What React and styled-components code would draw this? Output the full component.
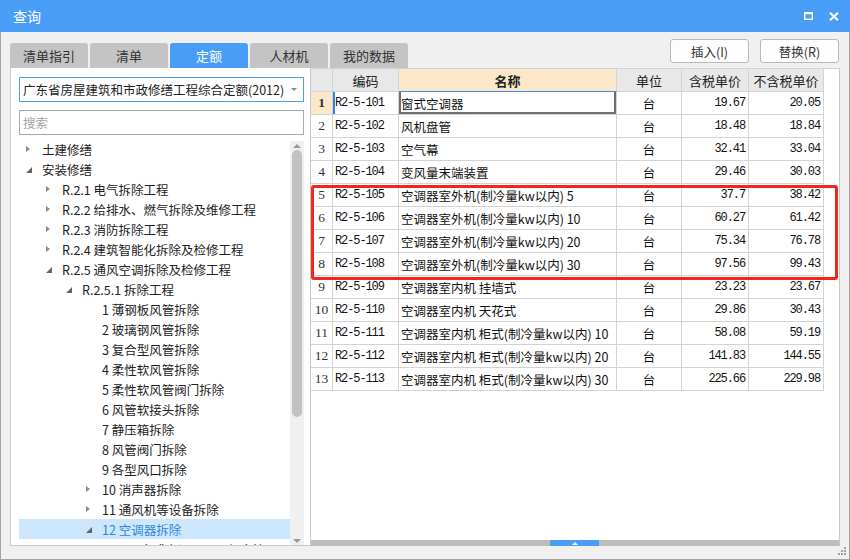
import React from 'react';
import styled, { createGlobalStyle } from 'styled-components';

const BLUE = '#4a9df7';

const GlobalStyle = createGlobalStyle`
  html, body {
    margin: 0;
    padding: 0;
    background: #ffffff;
  }
  body {
    font-family: "Noto Sans CJK SC", "Noto Sans", sans-serif;
    font-size: 12px;
    color: #222;
  }
  * {
    box-sizing: border-box;
  }
`;

const Window = styled.div`
  position: relative;
  width: 850px;
  height: 560px;
  display: flex;
  flex-direction: column;
  background: #f0f0f0;
  overflow: hidden;
`;

const TitleBar = styled.div`
  height: 32px;
  flex-shrink: 0;
  background: ${BLUE};
  color: #fff;
  display: flex;
  align-items: center;
  padding: 0 11px 0 13px;
`;

const Title = styled.div`
  font-size: 14px;
  flex: 1;
  line-height: 1;
`;

const TitleButtons = styled.div`
  display: flex;
  align-items: center;
  gap: 16px;
`;

const Body = styled.div`
  flex: 1;
  min-height: 0;
  display: flex;
  flex-direction: column;
  border: 1px solid #a3a3a3;
  border-top: none;
  padding: 0 9px 13px 9px;
`;

const TopRow = styled.div`
  height: 36px;
  flex-shrink: 0;
  display: flex;
  align-items: flex-end;
`;

const Tabs = styled.div`
  display: flex;
  gap: 2px;
`;

const Tab = styled.div`
  width: 78px;
  height: 25px;
  border-radius: 3px 3px 0 0;
  background: ${p => (p.$active ? BLUE : '#c4c4c4')};
  color: ${p => (p.$active ? '#fff' : '#333')};
  display: flex;
  align-items: center;
  justify-content: center;
  font-size: 13px;
`;

const Actions = styled.div`
  margin-left: auto;
  margin-right: 1px;
  align-self: flex-start;
  margin-top: 7px;
  display: flex;
  gap: 11px;
`;

const Button = styled.button`
  width: 79px;
  height: 24px;
  border: 1px solid #b9b9b9;
  border-radius: 3px;
  background: #fdfdfd;
  font-family: inherit;
  font-size: 12.5px;
  color: #333;
  padding: 0;
`;

const Content = styled.div`
  flex: 1;
  display: flex;
  min-height: 0;
`;

const LeftPane = styled.div`
  width: 300px;
  flex-shrink: 0;
  background: #fff;
  border-left: 1px solid #c9c9c9;
  border-bottom: 1px solid #c9c9c9;
  padding: 9px 6px 0 8px;
  display: flex;
  flex-direction: column;
  overflow: hidden;
`;

const Select = styled.div`
  height: 25px;
  flex-shrink: 0;
  border: 1px solid ${BLUE};
  display: flex;
  align-items: center;
  padding: 0 6px 0 3px;
  color: #222;
  font-size: 12.5px;
`;

const SelectText = styled.span`
  flex: 1;
  white-space: nowrap;
`;

const SelectArrow = styled.span`
  width: 0;
  height: 0;
  border-left: 3px solid transparent;
  border-right: 3px solid transparent;
  border-top: 3px solid #888;
`;

const Search = styled.div`
  height: 25px;
  flex-shrink: 0;
  margin-top: 8px;
  border: 1px solid #a9a9a9;
  display: flex;
  align-items: center;
  padding-left: 3px;
  color: #a3a3a3;
  font-size: 12.5px;
`;

const TreeWrap = styled.div`
  flex: 1;
  min-height: 0;
  margin-top: 4px;
  display: flex;
`;

const TreeList = styled.div`
  flex: 1;
  overflow: hidden;
`;

const TreeRow = styled.div`
  height: 20px;
  display: flex;
  align-items: center;
  padding-left: ${p => 7 + p.$level * 20}px;
  background: ${p => (p.$selected ? '#cce6fb' : 'transparent')};
  color: ${p => (p.$selected ? '#2f86dc' : '#222')};
  white-space: nowrap;
  font-size: 12.5px;
`;

const CaretSlot = styled.span`
  width: 16px;
  flex-shrink: 0;
  display: flex;
  align-items: center;
`;

const CaretClosed = styled.span`
  width: 0;
  height: 0;
  border-left: 4px solid #8c8c8c;
  border-top: 3.5px solid transparent;
  border-bottom: 3.5px solid transparent;
`;

const CaretOpen = styled.span`
  width: 0;
  height: 0;
  margin-top: 2px;
  border-left: 6px solid transparent;
  border-bottom: 6px solid #666;
`;

const VScroll = styled.div`
  width: 14px;
  flex-shrink: 0;
  margin-top: 2px;
  background: #f0f0f0;
  display: flex;
  flex-direction: column;
  align-items: center;
`;

const ScrollArrow = styled.div`
  height: 9px;
  flex-shrink: 0;
  display: flex;
  align-items: center;
  justify-content: center;
  &::after {
    content: '';
    width: 0;
    height: 0;
    border-left: 4px solid transparent;
    border-right: 4px solid transparent;
    ${p => (p.$down ? 'border-top: 4px solid #999;' : 'border-bottom: 4px solid #999;')}
  }
`;

const Thumb = styled.div`
  width: 10px;
  height: 267px;
  flex-shrink: 0;
  border-radius: 5px;
  background: #c2c2c2;
`;

const Spacer = styled.div`
  flex: 1;
`;

const RightPane = styled.div`
  flex: 1;
  display: flex;
  flex-direction: column;
  border-left: 1px solid #c9c9c9;
  border-right: 1px solid #c9c9c9;
  border-top: 1px solid #d3d3d3;
  min-width: 0;
`;

const TableArea = styled.div`
  flex: 1;
  position: relative;
  background: #fff;
`;

const Grid = styled.div`
  display: grid;
  grid-template-columns: 22px 66px 218px 65px 67px 75px;
  grid-auto-rows: 23px;
  width: 513px;
`;

const Cell = styled.div`
  border-right: 1px solid #d3d3d3;
  border-bottom: 1px solid #d3d3d3;
  display: flex;
  align-items: center;
  justify-content: ${p => (p.$align === 'right' ? 'flex-end' : p.$align === 'center' ? 'center' : 'flex-start')};
  padding: ${p => (p.$align === 'right' ? '0 3px 0 0' : p.$align === 'center' ? '0' : '0 0 0 2px')};
  white-space: nowrap;
  overflow: hidden;
  color: #111;
  background: ${p => p.$bg || '#fff'};
  font-weight: ${p => (p.$bold ? 700 : 400)};
  font-size: 12.5px;
`;

const HeadCell = styled(Cell)`
  background: ${p => (p.$accent ? '#fde7c9' : '#e8e8e8')};
  font-size: 13px;
  color: #222;
  ${p => p.$accent && `border-bottom-color: #3d8ee8;`}
`;

const IndexCell = styled(Cell)`
  font-family: "Liberation Serif", "DejaVu Serif", serif;
  font-size: 13.5px;
  color: #333;
`;

const MonoCell = styled(Cell)`
  font-family: "Liberation Mono", "DejaVu Sans Mono", monospace;
  font-size: 12px;
  letter-spacing: -1.1px;
`;

const CodeCell = styled(MonoCell)`
  ${p => p.$marked && `box-shadow: inset 2px 0 0 #2f80ed;`}
`;

const NameCell = styled(Cell)`
  ${p => p.$active && `box-shadow: inset 2px 0 0 #6f6f6f, inset -2px 0 0 #6f6f6f, inset 0 -2px 0 #6f6f6f;`}
`;

const Highlight = styled.div`
  position: absolute;
  left: 0;
  top: 116px;
  width: 527px;
  height: 95px;
  border: 3px solid #f3261c;
  border-radius: 3px;
  pointer-events: none;
`;

const HSplit = styled.div`
  height: 6px;
  flex-shrink: 0;
  background: #bdbdbd;
  display: flex;
`;

const SplitHandle = styled.div`
  margin-left: 239px;
  width: 49px;
  height: 100%;
  background: ${BLUE};
  display: flex;
  align-items: center;
  justify-content: center;
  &::after {
    content: '';
    width: 0;
    height: 0;
    border-left: 3px solid transparent;
    border-right: 3px solid transparent;
    border-bottom: 3px solid #fff;
  }
`;

const Grip = styled.svg`
  position: absolute;
  right: 3px;
  bottom: 4px;
`;

const tree = [
  { level: 0, caret: 'closed', text: '土建修缮' },
  { level: 0, caret: 'open', text: '安装修缮' },
  { level: 1, caret: 'closed', text: 'R.2.1 电气拆除工程' },
  { level: 1, caret: 'closed', text: 'R.2.2 给排水、燃气拆除及维修工程' },
  { level: 1, caret: 'closed', text: 'R.2.3 消防拆除工程' },
  { level: 1, caret: 'closed', text: 'R.2.4 建筑智能化拆除及检修工程' },
  { level: 1, caret: 'open', text: 'R.2.5 通风空调拆除及检修工程' },
  { level: 2, caret: 'open', text: 'R.2.5.1 拆除工程' },
  { level: 3, text: '1 薄钢板风管拆除' },
  { level: 3, text: '2 玻璃钢风管拆除' },
  { level: 3, text: '3 复合型风管拆除' },
  { level: 3, text: '4 柔性软风管拆除' },
  { level: 3, text: '5 柔性软风管阀门拆除' },
  { level: 3, text: '6 风管软接头拆除' },
  { level: 3, text: '7 静压箱拆除' },
  { level: 3, text: '8 风管阀门拆除' },
  { level: 3, text: '9 各型风口拆除' },
  { level: 3, caret: 'closed', text: '10 消声器拆除' },
  { level: 3, caret: 'closed', text: '11 通风机等设备拆除' },
  { level: 3, caret: 'open', text: '12 空调器拆除', selected: true },
  { level: 4, text: '(1) 窗式空调器、风机盘管' },
];

const rows = [
  ['R2-5-101', '窗式空调器', '19.67', '20.05'],
  ['R2-5-102', '风机盘管', '18.48', '18.84'],
  ['R2-5-103', '空气幕', '32.41', '33.04'],
  ['R2-5-104', '变风量末端装置', '29.46', '30.03'],
  ['R2-5-105', '空调器室外机(制冷量kw以内) 5', '37.7', '38.42'],
  ['R2-5-106', '空调器室外机(制冷量kw以内) 10', '60.27', '61.42'],
  ['R2-5-107', '空调器室外机(制冷量kw以内) 20', '75.34', '76.78'],
  ['R2-5-108', '空调器室外机(制冷量kw以内) 30', '97.56', '99.43'],
  ['R2-5-109', '空调器室内机 挂墙式', '23.23', '23.67'],
  ['R2-5-110', '空调器室内机 天花式', '29.86', '30.43'],
  ['R2-5-111', '空调器室内机 柜式(制冷量kw以内) 10', '58.08', '59.19'],
  ['R2-5-112', '空调器室内机 柜式(制冷量kw以内) 20', '141.83', '144.55'],
  ['R2-5-113', '空调器室内机 柜式(制冷量kw以内) 30', '225.66', '229.98'],
];

const tabs = ['清单指引', '清单', '定额', '人材机', '我的数据'];

export default function App() {
  return (
    <>
      <GlobalStyle />
      <Window>
        <TitleBar>
          <Title>查询</Title>
          <TitleButtons>
            <svg width="9" height="8" viewBox="0 0 9 8">
              <rect x="0" y="0" width="9" height="2.2" fill="#fff" />
              <rect x="0.7" y="0.7" width="7.6" height="6.6" fill="none" stroke="#fff" strokeWidth="1.4" />
            </svg>
            <svg width="10" height="9" viewBox="0 0 10 9">
              <path d="M1 0.8 L9 8.2 M9 0.8 L1 8.2" stroke="#fff" strokeWidth="2" />
            </svg>
          </TitleButtons>
        </TitleBar>
        <Body>
          <TopRow>
            <Tabs>
              {tabs.map(t => (
                <Tab key={t} $active={t === '定额'}>{t}</Tab>
              ))}
            </Tabs>
            <Actions>
              <Button>插入(I)</Button>
              <Button>替换(R)</Button>
            </Actions>
          </TopRow>
          <Content>
            <LeftPane>
              <Select>
                <SelectText>广东省房屋建筑和市政修缮工程综合定额(2012)</SelectText>
                <SelectArrow />
              </Select>
              <Search>搜索</Search>
              <TreeWrap>
                <TreeList>
                  {tree.map((n, i) => (
                    <TreeRow key={i} $level={n.level} $selected={n.selected}>
                      <CaretSlot>
                        {n.caret === 'closed' && <CaretClosed />}
                        {n.caret === 'open' && <CaretOpen />}
                      </CaretSlot>
                      {n.text}
                    </TreeRow>
                  ))}
                </TreeList>
                <VScroll>
                  <ScrollArrow />
                  <Thumb />
                  <Spacer />
                  <ScrollArrow $down />
                </VScroll>
              </TreeWrap>
            </LeftPane>
            <RightPane>
              <TableArea>
                <Grid>
                  <HeadCell />
                  <HeadCell $align="center">编码</HeadCell>
                  <HeadCell $align="center" $accent $bold>名称</HeadCell>
                  <HeadCell $align="center">单位</HeadCell>
                  <HeadCell $align="center">含税单价</HeadCell>
                  <HeadCell $align="center">不含税单价</HeadCell>
                  {rows.map((r, i) => (
                    <React.Fragment key={r[0]}>
                      <IndexCell $align="center" $bg={i === 0 ? '#fde7c9' : undefined} $bold={i === 0}>
                        {i + 1}
                      </IndexCell>
                      <CodeCell $marked={i === 0}>{r[0]}</CodeCell>
                      <NameCell $active={i === 0}>{r[1]}</NameCell>
                      <Cell $align="center">台</Cell>
                      <MonoCell $align="right">{r[2]}</MonoCell>
                      <MonoCell $align="right">{r[3]}</MonoCell>
                    </React.Fragment>
                  ))}
                </Grid>
                <Highlight />
              </TableArea>
              <HSplit>
                <SplitHandle />
              </HSplit>
            </RightPane>
          </Content>
        </Body>
        <Grip width="9" height="9" viewBox="0 0 9 9">
          <rect x="6" y="0" width="2" height="2" fill="#a0a0a0" />
          <rect x="3" y="3" width="2" height="2" fill="#a0a0a0" />
          <rect x="6" y="3" width="2" height="2" fill="#a0a0a0" />
          <rect x="0" y="6" width="2" height="2" fill="#a0a0a0" />
          <rect x="3" y="6" width="2" height="2" fill="#a0a0a0" />
          <rect x="6" y="6" width="2" height="2" fill="#a0a0a0" />
        </Grip>
      </Window>
    </>
  );
}
